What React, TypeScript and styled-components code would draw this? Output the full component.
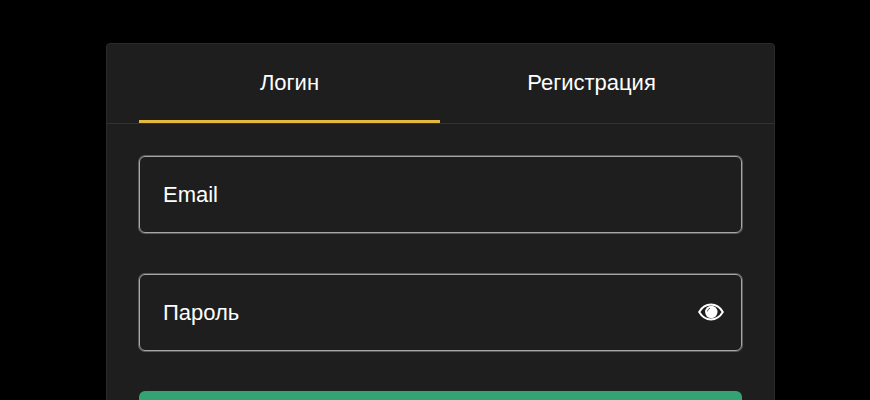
import React from "react";
import styled, { createGlobalStyle } from "styled-components";

const Global = createGlobalStyle`
  html, body { margin: 0; background: #000; height: 400px; overflow: hidden; }
  * { box-sizing: border-box; }
`;

const Page = styled.div`
  height: 400px;
  overflow: hidden;
  padding: 43px 0 0 106px;
  font-family: "Liberation Sans", Arial, sans-serif;
  color: #fff;
`;

const Card = styled.div`
  width: 669px;
  height: 420px;
  background: #1e1e1e;
  border: 1px solid #2b2b2b;
  border-radius: 4px;
`;

const Tabs = styled.div`
  display: flex;
  height: 80px;
  padding: 0 32px;
  border-bottom: 1px solid #333;
`;

const Tab = styled.div<{ $active?: boolean }>`
  flex: 1;
  display: flex;
  align-items: center;
  justify-content: center;
  font-size: 22px;
  padding: 2px 0 0 ${(p) => (p.$active ? "0" : "1px")};
  border-bottom: 3px solid ${(p) => (p.$active ? "#e5b93e" : "transparent")};
`;

const Form = styled.div`
  display: flex;
  flex-direction: column;
  padding: 32px 32px 0;
`;

const Field = styled.div`
  height: 77px;
  margin-bottom: 41px;
  display: flex;
  align-items: center;
  justify-content: space-between;
  padding: 0 17px 0 23px;
  border: 1px solid #a6a6a6;
  border-radius: 6px;
  box-shadow: 0 0 0 1px rgba(128, 128, 128, 0.6);
  font-size: 22px;
`;

const Submit = styled.div`
  height: 60px;
  margin-top: -1px;
  background: #33a373;
  border-radius: 6px;
`;

const EyeIcon = styled.svg`
  width: 26px;
  height: 18px;
  display: block;
  margin-bottom: 2px;
`;

export default function App() {
  return (
    <Page>
      <Global />
      <Card>
        <Tabs>
          <Tab $active>Логин</Tab>
          <Tab>Регистрация</Tab>
        </Tabs>
        <Form>
          <Field>Email</Field>
          <Field>
            Пароль
            <EyeIcon viewBox="0 0 26 18">
              <path
                d="M1.2 9C4 4.2 8.2 1.6 13 1.6S22 4.2 24.8 9C22 13.8 17.8 16.4 13 16.4S4 13.8 1.2 9Z"
                fill="none"
                stroke="#fff"
                strokeWidth="2"
              />
              <circle cx="13.3" cy="9" r="6.2" fill="#fff" />
              <path d="M9.4 8.4C9.7 6.9 10.6 5.8 12 5.2" fill="none" stroke="#1e1e1e" strokeWidth="0.8" />
            </EyeIcon>
          </Field>
          <Submit />
        </Form>
      </Card>
    </Page>
  );
}
